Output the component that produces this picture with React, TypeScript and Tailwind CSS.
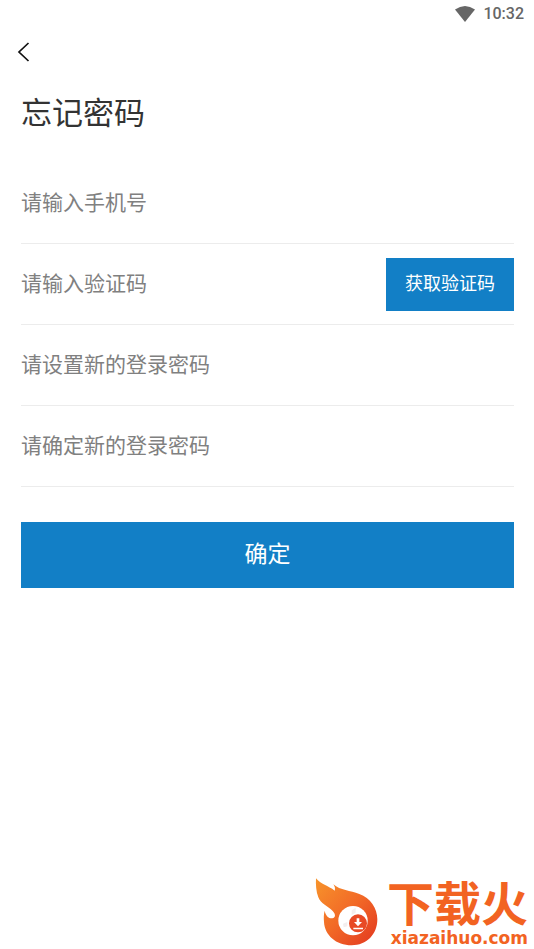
import { useState } from "react";

const FIELDS = [
  { id: "phone", placeholder: "请输入手机号", type: "tel" },
  { id: "code", placeholder: "请输入验证码", type: "text", withCode: true },
  { id: "password", placeholder: "请设置新的登录密码", type: "password" },
  { id: "confirm", placeholder: "请确定新的登录密码", type: "password" },
];

export default function App() {
  const [values, setValues] = useState<Record<string, string>>({});

  return (
    <div className="relative flex min-h-screen flex-col bg-white font-['Roboto','Noto_Sans_CJK_SC',sans-serif]">
      <StatusBar />

      <nav className="flex h-12 items-center px-4">
        <button type="button" aria-label="返回" className="py-2">
          <svg width="16" height="20" viewBox="0 0 16 20" fill="none" stroke="#111" strokeWidth="1.7">
            <path d="M12.5 1 L3 10 L12.5 19" />
          </svg>
        </button>
      </nav>

      <main className="pl-[21px] pr-5">
        <h1 className="mt-[18px] text-[31px] leading-10 text-[#333]">忘记密码</h1>

        <form className="mt-[29px]" onSubmit={(e) => e.preventDefault()}>
          {FIELDS.map((f) => (
            <div key={f.id} className="flex h-[81px] items-center border-b border-[#ececec]">
              <input
                id={f.id}
                type={f.type}
                aria-label={f.placeholder}
                placeholder={f.placeholder}
                value={values[f.id] || ""}
                onChange={(e) => setValues({ ...values, [f.id]: e.target.value })}
                className="h-full min-w-0 flex-1 text-[21px] text-[#333] outline-none placeholder:text-[#808080]"
              />
              {f.withCode && (
                <button type="button" className="h-[53px] w-32 bg-[#127fc6] text-lg text-white">
                  获取验证码
                </button>
              )}
            </div>
          ))}

          <button type="submit" className="mt-[35px] h-[66px] w-full bg-[#127fc6] text-[23px] text-white">
            确定
          </button>
        </form>
      </main>

      <Watermark />
    </div>
  );
}

function StatusBar() {
  return (
    <header className="flex h-7 items-center justify-end gap-2 pr-[10px] text-[#666]">
      <svg width="20" height="16" viewBox="0 0 20 16" fill="currentColor" aria-hidden="true">
        <path d="M0 3.6 Q10 -3.4 20 3.6 L10 16 Z" />
      </svg>
      <span className="text-base font-medium">10:32</span>
    </header>
  );
}

function Watermark() {
  return (
    <div className="absolute bottom-0 right-1.5 flex items-end gap-2 pb-px text-[#f26322]">
      <svg width="64" height="68" viewBox="36 28 192 204" className="mb-0.5" aria-hidden="true">
        <defs>
          <linearGradient id="flame" x1="0" y1="0" x2="1" y2="1">
            <stop offset="0" stopColor="#f7942b" />
            <stop offset="0.5" stopColor="#f26a27" />
            <stop offset="1" stopColor="#e2361f" />
          </linearGradient>
        </defs>
        <path
          fill="url(#flame)"
          d="M39 29 C53 47 76 51 95 66 C97 60 96 54 91 47 C112 66 142 65 169 76 C202 87 223 119 223 152 C223 197 191 230 146 230 C99 230 65 199 63 160 C62 147 62 137 65 126 C68 141 77 150 88 149 C99 147 98 136 89 127 C76 113 53 106 46 86 C39 68 38 48 39 29 Z"
        />
        <circle cx="150" cy="156" r="44" fill="#fff" />
        <path d="M146 125 L158 117 V132 L146 139 Z M120 165 L133 160 V173 L122 176 Z" fill="#f3eeee" />
        <circle cx="165" cy="164" r="27" fill="#e84a25" />
        <path d="M161 149 h8 v11 h8 l-12 13 l-12 -13 h8 Z M151 177 h29 v5 h-29 Z" fill="#fff" />
      </svg>
      <div className="flex flex-col items-end gap-[3px]">
        <span className="font-['Noto_Sans_CJK_SC',sans-serif] text-[47px] font-bold leading-[48px]">下载火</span>
        <span className="font-['DejaVu_Sans',sans-serif] text-[17px] font-bold leading-5">xiazaihuo.com</span>
      </div>
    </div>
  );
}
